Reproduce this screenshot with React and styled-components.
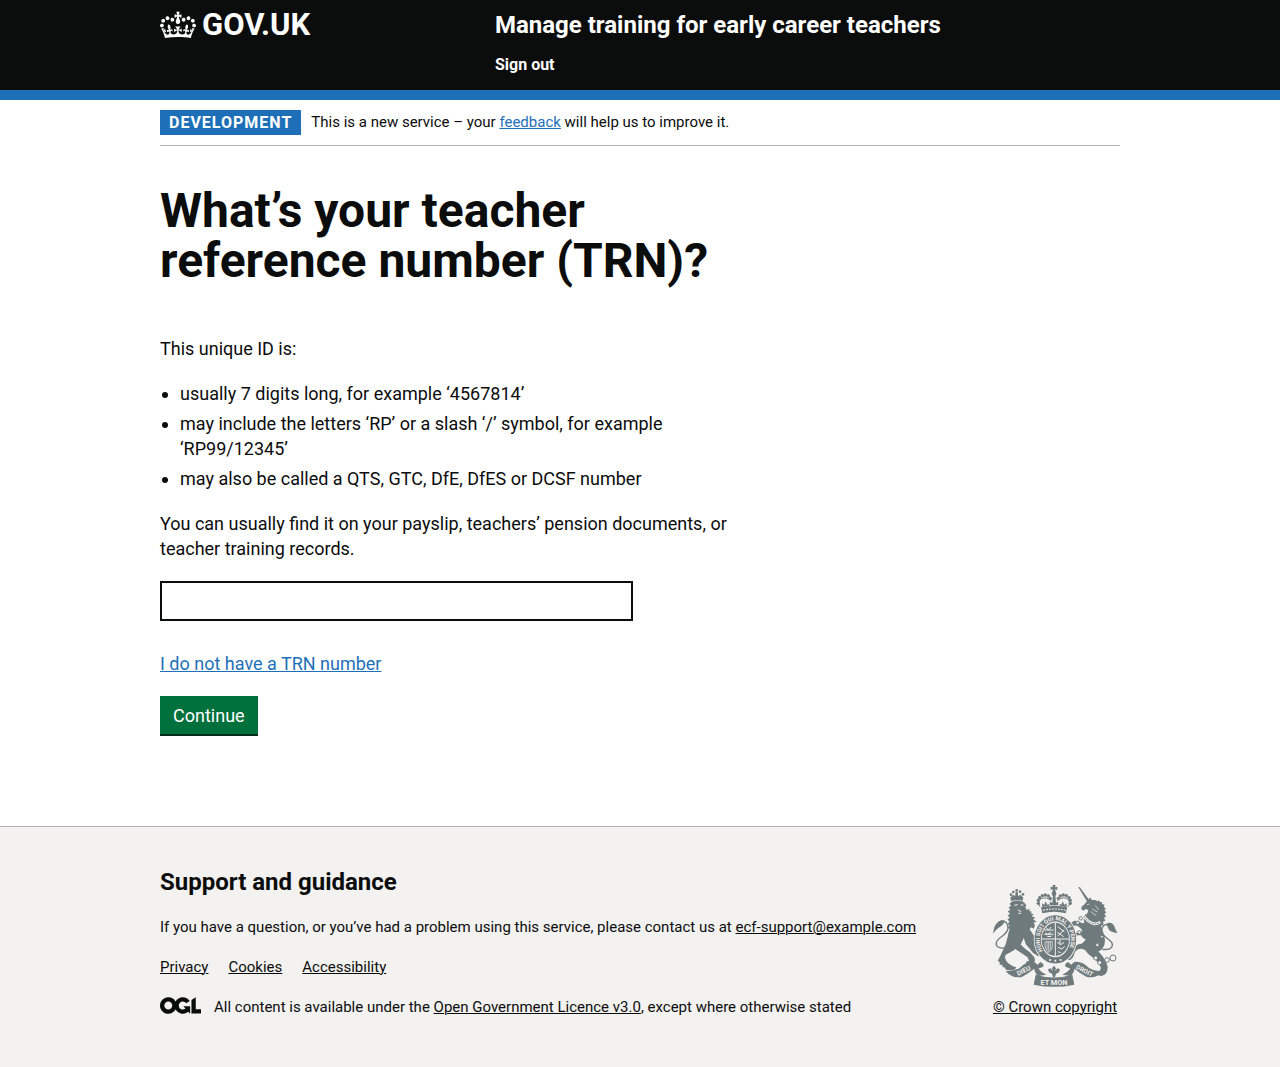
import React from "react";
import styled, { createGlobalStyle, css } from "styled-components";

const ink = "#0b0c0c";
const blue = "#1d70b8";
const grey = "#f3f2f1";
const line = "#b1b4b6";

const GlobalStyle = createGlobalStyle`
  html { background: ${grey}; }
  body {
    margin: 0;
    background: #fff;
    color: ${ink};
    font-family: Roboto, "Noto Sans", Arial, sans-serif;
    font-size: 18px;
    line-height: 25px;
  }
  *, *::before, *::after { box-sizing: border-box; }
`;

const Container = styled.div`
  max-width: 960px;
  margin: 0 auto;
`;

const Link = styled.a`
  color: ${(p) => (p.$dark ? ink : blue)};
  text-decoration: underline;
  text-decoration-thickness: 1px;
  text-underline-offset: 1px;
`;

const Header = styled.header`
  background: ${ink};
  color: #fff;
  border-bottom: 10px solid ${blue};
`;

const HeaderRow = styled(Container)`
  display: flex;
  padding: 10px 0 13px;
`;

const LogoCell = styled.div`
  width: 33.33%;
`;

const LogoLink = styled.a`
  display: inline-flex;
  align-items: center;
  gap: 6px;
  color: #fff;
  font-size: 31px;
  line-height: 30px;
  font-weight: 700;
  text-decoration: none;
`;

const HeaderContent = styled.div`
  flex: 1;
  padding-left: 15px;
`;

const HeaderLink = styled.a`
  display: block;
  width: fit-content;
  color: #fff;
  font-weight: 700;
  text-decoration: none;
  ${(p) =>
    p.$title
      ? css`
          font-size: 24px;
          line-height: 30px;
          margin-bottom: 12px;
        `
      : css`
          font-size: 16px;
          line-height: 25px;
        `}
`;

const Phase = styled.div`
  display: flex;
  align-items: center;
  gap: 10px;
  padding: 10px 0;
  border-bottom: 1px solid ${line};
  font-size: 15px;
`;

const Tag = styled.strong`
  padding: 0 9px;
  background: ${blue};
  color: #fff;
  font-size: 16px;
  letter-spacing: 1px;
`;

const Main = styled.main`
  max-width: 630px;
  padding: 40px 0 90px;
`;

const Title = styled.h1`
  margin: 0 0 50px;
  font-size: 48px;
  line-height: 50px;
  font-weight: 700;
`;

const Text = styled.p`
  margin: 0 0 20px;
`;

const List = styled.ul`
  display: grid;
  gap: 5px;
  max-width: 600px;
  margin: 0 0 20px;
  padding-left: 20px;
`;

const Input = styled.input`
  display: block;
  width: 75%;
  height: 40px;
  margin-bottom: 30px;
  padding: 5px;
  border: 2px solid ${ink};
  border-radius: 0;
  background: #fff;
  font: inherit;
`;

const Button = styled.button`
  display: block;
  height: 38px;
  padding: 0 13px;
  margin-bottom: 2px;
  border: 0;
  background: #00703c;
  box-shadow: 0 2px 0 #002d18;
  color: #fff;
  font: inherit;
  cursor: pointer;
`;

const Footer = styled.footer`
  border-top: 1px solid ${line};
  background: ${grey};
  font-size: 15px;
  line-height: 20px;
`;

const FooterRow = styled(Container)`
  display: flex;
  justify-content: space-between;
  align-items: flex-end;
  padding: 40px 0 50px;
`;

const FooterTitle = styled.h2`
  margin: 0 0 20px;
  font-size: 24px;
  line-height: 30px;
  font-weight: 700;
`;

const FooterLinks = styled.nav`
  display: flex;
  gap: 20px;
  margin-bottom: 20px;
`;

const Licence = styled.div`
  display: flex;
  gap: 13px;
`;

const Copyright = styled(Link)`
  display: flex;
  flex-direction: column;
  align-items: center;
  gap: 10px;
  min-width: 130px;
  white-space: nowrap;
`;

function Crown() {
  return (
    <svg width="36" height="30" viewBox="0 0 132 97" fill="currentColor" aria-hidden="true">
      <path fillRule="evenodd" d="M25 30.2c3.5 1.5 7.7-.2 9.1-3.7 1.5-3.6-.2-7.8-3.9-9.2-3.6-1.4-7.6.3-9.1 3.9-1.4 3.5.3 7.5 3.9 9zM9 39.5c3.6 1.5 7.8-.2 9.2-3.7 1.5-3.6-.2-7.8-3.9-9.1-3.6-1.5-7.6.2-9.1 3.8-1.4 3.5.3 7.5 3.8 9zM4.4 57.2c3.5 1.5 7.7-.2 9.1-3.8 1.5-3.6-.2-7.7-3.9-9.1-3.5-1.5-7.6.3-9.1 3.8-1.4 3.5.3 7.6 3.9 9.1zm38.3-21.4c3.5 1.5 7.7-.2 9.1-3.8 1.5-3.6-.2-7.7-3.9-9.1-3.6-1.5-7.6.3-9.1 3.8-1.3 3.6.4 7.7 3.9 9.1zm64.4-5.6c-3.6 1.5-7.8-.2-9.1-3.7-1.5-3.6.2-7.8 3.8-9.2 3.6-1.4 7.7.3 9.2 3.9 1.3 3.5-.4 7.5-3.9 9zm15.9 9.3c-3.6 1.5-7.7-.2-9.1-3.7-1.5-3.6.2-7.8 3.7-9.1 3.6-1.5 7.7.2 9.2 3.8 1.5 3.5-.3 7.5-3.8 9zm4.7 17.7c-3.6 1.5-7.8-.2-9.2-3.8-1.5-3.6.2-7.7 3.9-9.1 3.6-1.5 7.7.3 9.2 3.8 1.3 3.5-.4 7.6-3.9 9.1zM89.3 35.8c-3.6 1.5-7.8-.2-9.2-3.8-1.4-3.6.2-7.7 3.9-9.1 3.6-1.5 7.7.3 9.2 3.8 1.4 3.6-.3 7.7-3.9 9.1zM69.7 17.7l8.9 4.7V9.3l-8.9 2.8c-.2-.3-.5-.6-.9-.9L72.4 0H59.6l3.5 11.2c-.3.3-.6.5-.9.9l-8.8-2.8v13.1l8.8-4.7c.3.3.6.7.9.9l-5 15.4v.1c-.2.8-.4 1.6-.4 2.4 0 4.1 3.1 7.5 7 8.1h.2c.3 0 .7.1 1 .1.4 0 .7 0 1-.1h.2c4-.6 7.1-4.1 7.1-8.1 0-.8-.1-1.7-.4-2.4V34l-5.1-15.4c.4-.2.7-.6 1-.9zM66 92.8c16.9 0 32.8 1.1 47.1 3.2 4-16.9 8.9-26.7 14-33.5l-9.6-3.4c1 4.9 1.1 7.2 0 10.2-1.5-1.4-3-4.3-4.2-8.7L108.6 76c2.8-2 5-3.2 7.5-3.3-4.4 9.4-10 11.9-13.6 11.2-4.3-.8-6.3-4.6-5.6-7.9 1-4.7 5.7-5.9 8-.5 4.3-8.7-3-11.4-7.6-8.8 7.1-7.2 7.9-13.5 2.1-21.1-8 6.1-8.1 12.3-4.5 20.8-4.7-5.4-12.1-2.5-9.5 6.2 3.4-5.2 7.9-2 7.2 3.1-.6 4.3-6.4 7.8-13.5 7.2-10.3-.9-10.9-8-11.2-13.8 2.5-.5 7.1 1.8 11 7.3L80.2 60c-4.1 4.4-8 5.3-12.3 5.4 1.4-4.4 8-11.6 8-11.6H55.5s6.4 7.2 7.9 11.6c-4.2-.1-8-1-12.3-5.4l1.4 16.4c3.9-5.5 8.5-7.7 10.9-7.3-.3 5.8-.9 12.8-11.1 13.8-7.2.6-12.9-2.9-13.5-7.2-.7-5 3.8-8.3 7.1-3.1 2.7-8.7-4.6-11.6-9.4-6.2 3.7-8.5 3.6-14.7-4.6-20.8-5.8 7.6-5 13.9 2.2 21.1-4.7-2.6-11.9.1-7.7 8.8 2.3-5.5 7.1-4.2 8.1.5.7 3.3-1.3 7.1-5.7 7.9-3.5.7-9-1.8-13.5-11.2 2.5.1 4.7 1.3 7.5 3.3l-4.7-15.4c-1.2 4.4-2.7 7.2-4.3 8.7-1.1-3-.9-5.3 0-10.2l-9.5 3.4c5 6.9 9.9 16.7 14 33.5 14.8-2.1 30.8-3.2 47.7-3.2z" />
    </svg>
  );
}

function OglLogo() {
  return (
    <svg width="41" height="17" viewBox="0 0 483.2 195.7" fill="currentColor" aria-hidden="true">
      <path d="M421.5 142.8V.1l-50.7 32.3v161.1h112.4v-50.7zm-122.3-9.6A47.12 47.12 0 0 1 221 97.8c0-26 21.1-47.1 47.1-47.1 16.7 0 31.4 8.7 39.7 21.8l42.7-27.2A97.63 97.63 0 0 0 268.1 0c-36.5 0-68.3 20.1-85.1 49.7A98 98 0 0 0 97.8 0C43.9 0 0 43.9 0 97.8s43.9 97.8 97.8 97.8c36.5 0 68.3-20.1 85.1-49.7a97.76 97.76 0 0 0 149.6 25.4l19.4 22.2h3v-87.8h-80l24.3 27.5zM97.8 145c-26 0-47.1-21.1-47.1-47.1s21.1-47.1 47.1-47.1 47.1 21.1 47.1 47.1S123.8 145 97.8 145" />
    </svg>
  );
}

const crownPearls = [
  [172, 100], [172, 91], [176, 83], [184, 77], [193, 75], [202, 78], [208, 85],
  [232, 85], [238, 78], [247, 75], [256, 77], [264, 83], [268, 91], [268, 100],
];

const chainLinks = [
  [299, 145, 5], [290, 158, 5], [295, 187, 5], [344, 264, 6],
  [356, 278, 6], [378, 270, 7], [396, 264, 9], [349, 225, 5], [363, 200, 4],
];

function Arms() {
  const c = "#6f7a7c";
  return (
    <svg width="125" height="102" viewBox="36 45 375 306" aria-hidden="true">
      {/* lion */}
      <g fill={c}>
        <path d="M90 93l-2-11q19-8 39-1l-2 11q-17-5-35 1z" />
        <circle cx="107" cy="61" r="4" />
        <circle cx="90" cy="74" r="4" />
        <circle cx="97" cy="66" r="4" />
        <circle cx="117" cy="65" r="4" />
        <circle cx="126" cy="73" r="4" />
        <path d="M104 65h6l2 17h-10zM92 77l7-3 2 8-9 2zM115 74l8 3-1 6-8-2z" />
      </g>
      <path fill={c} d="M92 95Q107 89 124 94L133 101 136 107 133 110 136 119 147 117 144 123 153 125 149 130 158 133 152 138 163 144 156 148 167 155 158 158 162 166 158 176 150 172 146 178Q160 196 166 214 174 232 186 240L192 256 186 260 170 258Q154 250 146 236L134 222Q132 214 128 204L120 222Q104 240 86 248 74 252 72 258 72 272 82 280L94 288 106 292 102 298 92 301 76 300 70 292 64 290 64 284 56 284 56 276 50 272 58 258 66 240Q76 222 80 200 82 188 86 178L80 172 86 168 80 160 86 156 79 148 86 144 80 136 87 132 80 124 88 120 83 112 90 108 86 101z" />
      <path fill={c} d="M114 216Q124 232 146 246L160 262Q164 272 158 280L152 284 140 282 134 276 144 272 140 262 122 250 104 238z" />
      <path d="M71 234c-16 2-28-5-25-16 3-16 32-21 35-43 2-15-9-23-18-22-8 1-12 8-14 16" fill="none" stroke={c} strokeWidth="4" />
      <path d="M37 191c0-14 4-26 13-34 8-7 18-7 22-3-5 9-10 14-17 18-5 4-11 8-18 19z" fill={c} />
      <path d="M100 106l10-2m9 1l8 0m-16 15l10 5m-9 5l8 0" fill="none" stroke={grey} strokeWidth="3" />

      {/* unicorn */}
      <path d="M292 52l4-1 29 40-6 5z" fill={c} />
      <path fill={c} d="M328 82L332 90 342 90 350 94 354 90 356 96 364 96 362 102 371 104 368 110 375 116 370 120 376 128 370 131 375 140 369 143 373 152 366 155 368 164 360 167 363 178Q372 196 372 212 372 226 364 236 358 242 352 244 366 258 374 274L380 290Q380 304 374 312L362 318 350 316 344 310 356 302 360 294 354 282Q346 270 334 262 320 252 312 240L302 236Q288 236 282 246L276 262 268 270 258 270 262 260 266 244Q278 226 296 222 306 222 314 208 304 206 300 196L290 196 284 202 276 204 272 196 278 190 284 188 300 186 304 182 298 174 290 168 282 166 276 172 280 182 276 186 268 180 266 168 270 158 280 152 292 154 304 160 310 158 308 148 311 136 319 130 322 120 314 117 308 122 301 118 302 110 309 104 316 96z" />
      <path d="M309 139Q322 158 338 161 350 163 358 156" fill="none" stroke={grey} strokeWidth="8" />
      <path d="M309 139Q322 158 338 161 350 163 358 156" fill="none" stroke={c} strokeWidth="3" strokeDasharray="5 3" />
      <path d="M318 104l7-2m17 4q8 6 10 14m-18-4q8 8 16 10m-20-2q6 10 16 12" fill="none" stroke={grey} strokeWidth="2" />
      <path d="M364 238c16 2 31-1 30-15-2-15-31-21-32-39-1-15 9-23 20-19 8 3 10 12 11 18" fill="none" stroke={c} strokeWidth="4" />
      <path d="M375 162c11-7 21-3 25 7 3 7 5 15 10 20-15-2-26-4-28-14z" fill={c} />
      {chainLinks.map(([x, y, r]) => (
        <circle key={`${x}-${y}`} cx={x} cy={y} r={r} fill={grey} stroke={c} strokeWidth="3" />
      ))}

      {/* crown */}
      <g fill={c}>
        <path d="M214 45h10l-2 7 7-2v10l-7-2 2 8h-10l2-8-7 2V50l7 2z" />
        <circle cx="219" cy="71" r="7" />
        <path d="M180 112q39-9 79 0l-5 18q-34-10-70 0z" />
        <path d="M216 76h7l2 22 7-3-1 11h-24l-1-11 8 3zM183 100l7 4 4-10 5 10 6-2v6l-21 3zM235 102l6 2 4-10 5 10 7-4v11l-21-3z" />
      </g>
      <path d="M177 110c-13-22 13-36 33-18M262 110c13-22-13-36-33-18" fill="none" stroke={c} strokeWidth="3" />
      {crownPearls.map(([x, y]) => (
        <circle key={`${x}-${y}`} cx={x} cy={y} r="5" fill={c} />
      ))}
      <path d="M186 121q34-8 68 0" fill="none" stroke={grey} strokeWidth="3" strokeDasharray="6 3" />

      {/* garter and shield */}
      <ellipse cx="223" cy="208" rx="65" ry="76" fill={grey} />
      <ellipse cx="223" cy="208" rx="53" ry="63" fill="none" stroke={c} strokeWidth="19" />
      <path id="garter" d="M188 246A47 57 0 1 1 258 246" fill="none" />
      <text fill={grey} fontFamily="Roboto, sans-serif" fontSize="17" fontWeight="700">
        <textPath href="#garter" startOffset="4">HONI SOIT QUI MAL Y PENSE</textPath>
      </text>
      <ellipse cx="223" cy="208" rx="41" ry="50" fill={c} />
      <path d="M223 158v100M182 207h82" stroke={grey} strokeWidth="3" />
      <path d="M189 180h29M190 193h27M194 172l9 8 7-9M193 188l7 5 10-6M199 200l12-1M230 170l20 15m-21 2l19 13m-18-2l20-19M229 217l10 7 10-7m-18 15l12 5 8-8m-20 16l8 3m-2-39v14" fill="none" stroke={grey} strokeWidth="3" />
      <path d="M192 215h22v16q-2 12-11 16-13-10-11-32zM198 216v23m5-23v28m5-28v23" fill="none" stroke={grey} strokeWidth="2" />
      <circle cx="207" cy="270" r="3" fill={grey} />
      <circle cx="223" cy="272" r="3" fill={grey} />
      <circle cx="239" cy="270" r="3" fill={grey} />

      {/* plant badge and motto ribbon */}
      <path d="M219 287l6 8-3 9 7-9 8 3-3 9-9 4-3 10h-6l-3-10-9-4-3-9 8-3 7 9-3-9z" fill={c} />
      <path d="M74 304Q98 304 116 294 138 272 160 276L170 284 178 276Q192 282 186 290L172 296Q182 308 196 314L172 318Q160 308 160 296 140 312 124 320 96 328 74 304z" fill={c} />
      <path d="M366 304Q342 304 324 294 302 272 280 276L270 284 262 276Q248 282 254 290L268 296Q258 308 244 314L268 318Q280 308 280 296 300 312 316 320 344 328 366 304z" fill={c} />
      <path d="M164 314q55 17 110 0l6 30q-60 13-122 0z" fill={c} />
      <g fill={grey} fontFamily="Roboto, sans-serif" fontWeight="700" textAnchor="middle">
        <text x="219" y="344" fontSize="22">ET MON</text>
        <text fontSize="20" transform="translate(131 308) rotate(-27)">DIEU</text>
        <text fontSize="19" transform="translate(308 308) rotate(27)">DROIT</text>
      </g>
    </svg>
  );
}

export default function App() {
  return (
    <>
      <GlobalStyle />
      <Header>
        <HeaderRow>
          <LogoCell>
            <LogoLink href="#">
              <Crown />
              <span>GOV.UK</span>
            </LogoLink>
          </LogoCell>
          <HeaderContent>
            <HeaderLink href="#" $title>Manage training for early career teachers</HeaderLink>
            <HeaderLink href="#">Sign out</HeaderLink>
          </HeaderContent>
        </HeaderRow>
      </Header>
      <Container>
        <Phase>
          <Tag>DEVELOPMENT</Tag>
          <span>
            This is a new service – your <Link href="#">feedback</Link> will help us to improve it.
          </span>
        </Phase>
        <Main>
          <Title>
            <label htmlFor="trn">What’s your teacher reference number (TRN)?</label>
          </Title>
          <Text>This unique ID is:</Text>
          <List>
            <li>usually 7 digits long, for example ‘4567814’</li>
            <li>may include the letters ‘RP’ or a slash ‘/’ symbol, for example ‘RP99/12345’</li>
            <li>may also be called a QTS, GTC, DfE, DfES or DCSF number</li>
          </List>
          <Text>
            You can usually find it on your payslip, teachers’ pension documents, or teacher training records.
          </Text>
          <Input id="trn" type="text" />
          <Text>
            <Link href="#">I do not have a TRN number</Link>
          </Text>
          <Button type="submit">Continue</Button>
        </Main>
      </Container>
      <Footer>
        <FooterRow>
          <div>
            <FooterTitle>Support and guidance</FooterTitle>
            <Text>
              If you have a question, or you’ve had a problem using this service, please contact us at{" "}
              <Link $dark href="#">ecf-support@example.com</Link>
            </Text>
            <FooterLinks>
              <Link $dark href="#">Privacy</Link>
              <Link $dark href="#">Cookies</Link>
              <Link $dark href="#">Accessibility</Link>
            </FooterLinks>
            <Licence>
              <OglLogo />
              <span>
                All content is available under the <Link $dark href="#">Open Government Licence v3.0</Link>, except
                where otherwise stated
              </span>
            </Licence>
          </div>
          <Copyright $dark href="#">
            <Arms />
            <span>© Crown copyright</span>
          </Copyright>
        </FooterRow>
      </Footer>
    </>
  );
}
